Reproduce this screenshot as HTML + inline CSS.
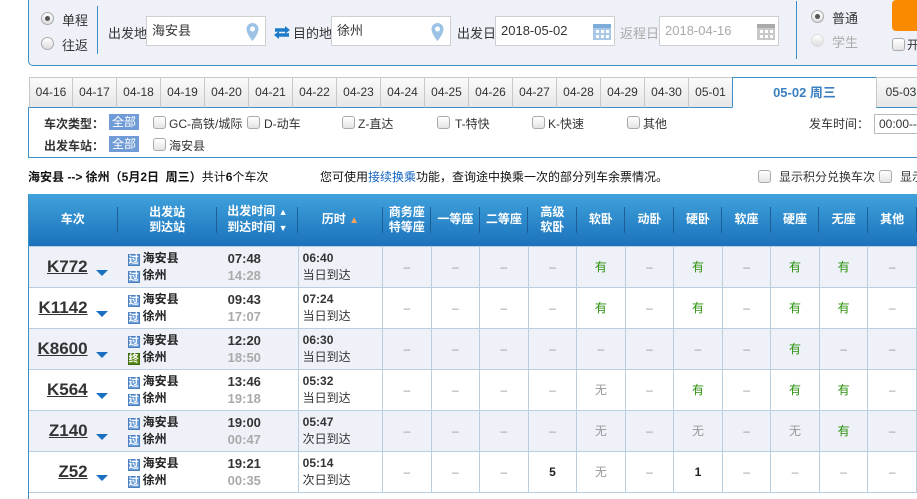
<!DOCTYPE html>
<html><head><meta charset="utf-8"><style>
*{margin:0;padding:0;box-sizing:border-box}
body{width:917px;height:499px;overflow:hidden;background:#fff;font-family:"Liberation Sans","Noto Sans CJK SC",sans-serif;font-size:12px;color:#333;position:relative}
.a{position:absolute;white-space:nowrap}
.top{position:absolute;left:28px;top:-5px;width:900px;height:71px;background:#eef1f8;border:1px solid #3b8fc5;border-radius:5px}
.radio{position:absolute;width:13px;height:13px;border-radius:50%;border:1px solid #aaa;background:linear-gradient(#fff,#ddd)}
.radio.on::after{content:"";position:absolute;left:3px;top:3px;width:5px;height:5px;border-radius:50%;background:#555}
.inp{position:absolute;height:30px;background:#fff;border:1px solid #cfcfcf;font-size:13px;line-height:28px;padding-left:5px}
.cb{position:absolute;width:13px;height:13px;border:1px solid #aaa;border-radius:3px;background:linear-gradient(#fff,#e4e4e4)}
.tab{position:absolute;top:77px;height:31px;border:1px solid #c8c8c8;border-bottom:1px solid #3b8fc5;background:linear-gradient(#fafafa,#e6e6e6);font-size:12px;line-height:29px;text-align:center;color:#333}
.filt{position:absolute;left:28px;top:107px;width:900px;height:51px;border:1px solid #3b8fc5;border-top:none}
.all{position:absolute;background:#6f9bd7;color:#fff;padding:0 3px;height:16px;line-height:16px;font-size:12px}
.b{font-weight:bold}
table{position:absolute;left:28px;top:194px;border-collapse:collapse;table-layout:fixed}
th{height:52px;background:linear-gradient(#40a2dc,#1b72bb);color:#fff;font-size:12px;font-weight:bold;line-height:15px;position:relative}
th::after{content:"";position:absolute;right:0;top:13px;height:26px;border-right:1px solid #1d5f95}
td{height:41px;border:1px solid #b9cfdf;text-align:center;color:#999;font-size:12px}
tr.o td{background:#eef1f8}
td.f{border-left:none;border-right:none}
.g{color:#28900a}
.k{color:#222;font-weight:bold}
.tn{font-size:17px;font-weight:bold;color:#333;text-decoration:underline}
.arr{display:inline-block;border:6px solid transparent;border-top:6px solid #1a6fc0;border-bottom:none;margin-left:8px;vertical-align:-4px}
.gi{display:inline-block;width:12px;height:12px;background:#6c9ed8;color:#fff;font-size:10px;line-height:12px;text-align:center;margin-right:3px;vertical-align:-1px;border:1px solid #4d7fc0}
.gi.j{background:#5a8a1a;border-color:#3d6a10}
.st{text-align:left;padding-left:10px;color:#222;font-weight:bold;line-height:17px}
.tm{text-align:left;padding-left:11px;line-height:17px;font-size:13px;font-weight:bold}
.ls{text-align:left;padding-left:4px;line-height:17px;color:#333}
</style></head><body>
<div class="top"></div>
<div class="radio on" style="left:41px;top:12px"></div><div class="a" style="left:62px;top:10px;font-size:13px">单程</div>
<div class="radio" style="left:41px;top:37px"></div><div class="a" style="left:62px;top:35px;font-size:13px">往返</div>
<div class="a" style="left:97px;top:6px;height:48px;border-left:1px solid #3b8fc5"></div>
<div class="a" style="left:108px;top:23px;font-size:13px">出发地</div>
<div class="inp" style="left:146px;top:16px;width:120px">海安县</div>
<svg class="a" style="left:245px;top:22px" width="15" height="20"><path d="M7.5 1a6 6 0 0 1 6 6c0 5-6 12-6 12s-6-7-6-12a6 6 0 0 1 6-6z" fill="#9cc3e6"/><circle cx="7.5" cy="7" r="2.5" fill="#fff"/></svg>
<svg class="a" style="left:273px;top:25px" width="18" height="15"><path d="M2 5h12M16 10H4" stroke="#1d7cc9" stroke-width="3.5" fill="none"/><path d="M12 1l5 4-5 4zM6 6l-5 4 5 4z" fill="#1d7cc9"/></svg>
<div class="a" style="left:293px;top:23px;font-size:13px">目的地</div>
<div class="inp" style="left:331px;top:16px;width:120px">徐州</div>
<svg class="a" style="left:430px;top:22px" width="15" height="20"><path d="M7.5 1a6 6 0 0 1 6 6c0 5-6 12-6 12s-6-7-6-12a6 6 0 0 1 6-6z" fill="#9cc3e6"/><circle cx="7.5" cy="7" r="2.5" fill="#fff"/></svg>
<div class="a" style="left:457px;top:23px;font-size:13px">出发日</div>
<div class="inp" style="left:495px;top:16px;width:120px">2018-05-02</div>
<svg class="a" style="left:592px;top:21px" width="20" height="20"><rect x="1" y="3" width="18" height="16" fill="#a8c8e6"/><rect x="1" y="3" width="18" height="4" fill="#7eacd8"/><g fill="#fff"><rect x="4" y="9" width="3" height="3"/><rect x="9" y="9" width="3" height="3"/><rect x="14" y="9" width="3" height="3"/><rect x="4" y="14" width="3" height="3"/><rect x="9" y="14" width="3" height="3"/><rect x="14" y="14" width="3" height="3"/></g></svg>
<div class="a" style="left:620px;top:23px;font-size:13px;color:#aaa">返程日</div>
<div class="inp" style="left:659px;top:16px;width:120px;color:#aaa">2018-04-16</div>
<svg class="a" style="left:756px;top:21px" width="20" height="20"><rect x="1" y="3" width="18" height="16" fill="#c8c8c8"/><rect x="1" y="3" width="18" height="4" fill="#aaa"/><g fill="#fff"><rect x="4" y="9" width="3" height="3"/><rect x="9" y="9" width="3" height="3"/><rect x="14" y="9" width="3" height="3"/><rect x="4" y="14" width="3" height="3"/><rect x="9" y="14" width="3" height="3"/><rect x="14" y="14" width="3" height="3"/></g></svg>
<div class="a" style="left:796px;top:1px;height:58px;border-left:1px solid #3b8fc5"></div>
<div class="radio on" style="left:811px;top:10px"></div><div class="a" style="left:832px;top:8px;font-size:13px">普通</div>
<div class="radio" style="left:811px;top:34px;border-color:#ddd"></div><div class="a" style="left:832px;top:32px;font-size:13px;color:#aaa">学生</div>
<div class="a" style="left:892px;top:0;width:30px;height:31px;background:#fb8a00;border-radius:4px"></div>
<div class="cb" style="left:892px;top:38px"></div><div class="a" style="left:907px;top:36px;font-size:12px">开</div>

<div class="tab" style="left:29px;width:44px">04-16</div><div class="tab" style="left:72px;width:45px">04-17</div><div class="tab" style="left:116px;width:45px">04-18</div><div class="tab" style="left:160px;width:45px">04-19</div><div class="tab" style="left:204px;width:45px">04-20</div><div class="tab" style="left:248px;width:45px">04-21</div><div class="tab" style="left:292px;width:45px">04-22</div><div class="tab" style="left:336px;width:45px">04-23</div><div class="tab" style="left:380px;width:45px">04-24</div><div class="tab" style="left:424px;width:45px">04-25</div><div class="tab" style="left:468px;width:45px">04-26</div><div class="tab" style="left:512px;width:45px">04-27</div><div class="tab" style="left:556px;width:45px">04-28</div><div class="tab" style="left:600px;width:45px">04-29</div><div class="tab" style="left:644px;width:45px">04-30</div><div class="tab" style="left:688px;width:45px">05-01</div>
<div class="tab" style="left:732px;width:145px;background:#fff;border-color:#3b8fc5;border-bottom:1px solid #fff;color:#3b7fc0;font-weight:bold;font-size:13px">05-02 周三</div>
<div class="tab" style="left:876px;width:50px">05-03</div>
<div class="filt"></div>
<div class="a b" style="left:44px;top:115px">车次类型：</div><div class="all" style="left:109px;top:114px">全部</div>
<div class="cb" style="left:153px;top:116px"></div><div class="a" style="left:169px;top:115px">GC-高铁/城际</div>
<div class="cb" style="left:247px;top:116px"></div><div class="a" style="left:264px;top:115px">D-动车</div>
<div class="cb" style="left:342px;top:116px"></div><div class="a" style="left:358px;top:115px">Z-直达</div>
<div class="cb" style="left:437px;top:116px"></div><div class="a" style="left:455px;top:115px">T-特快</div>
<div class="cb" style="left:532px;top:116px"></div><div class="a" style="left:548px;top:115px">K-快速</div>
<div class="cb" style="left:627px;top:116px"></div><div class="a" style="left:643px;top:115px">其他</div>
<div class="a" style="left:809px;top:115px">发车时间：</div>
<div class="a" style="left:874px;top:114px;width:50px;height:20px;border:1px solid #bbb;padding-left:4px;line-height:18px">00:00--</div>
<div class="a b" style="left:44px;top:137px">出发车站：</div><div class="all" style="left:109px;top:136px">全部</div>
<div class="cb" style="left:153px;top:138px"></div><div class="a" style="left:169px;top:137px">海安县</div>

<div class="a" style="left:28px;top:168px;color:#111"><b>海安县 --&gt; 徐州（5月2日&nbsp; 周三）</b>共计<b>6</b>个车次</div>
<div class="a" style="left:320px;top:168px;color:#111">您可使用<span style="color:#1565c0">接续换乘</span>功能，查询途中换乘一次的部分列车余票情况。</div>
<div class="cb" style="left:758px;top:170px"></div><div class="a" style="left:779px;top:168px">显示积分兑换车次</div>
<div class="cb" style="left:879px;top:170px"></div><div class="a" style="left:900px;top:168px">显示</div>

<table>
<colgroup><col style="width:90px"><col style="width:100px"><col style="width:82px"><col style="width:85px"><col style="width:49px"><col style="width:49px"><col style="width:49px"><col style="width:49px"><col style="width:49px"><col style="width:49px"><col style="width:49px"><col style="width:49px"><col style="width:49px"><col style="width:49px"><col style="width:49px"></colgroup>
<tr><th>车次</th><th>出发站<br>到达站</th><th>出发时间 <span style="font-size:9px">▲</span><br>到达时间 <span style="font-size:9px">▼</span></th><th>历时 <span style="color:#f6a25a;font-size:10px">▲</span></th><th>商务座<br>特等座</th><th>一等座</th><th>二等座</th><th>高级<br>软卧</th><th>软卧</th><th>动卧</th><th>硬卧</th><th>软座</th><th>硬座</th><th>无座</th><th>其他</th></tr>
<tr class="o"><td class="f" style="text-align:right;padding-right:10px"><span class="tn">K772</span><span class="arr"></span></td><td class="f st"><span class="gi">过</span>海安县<br><span class="gi">过</span>徐州</td><td class="f tm"><span style="color:#333">07:48</span><br><span style="color:#aaa">14:28</span></td><td class="ls"><b>06:40</b><br>当日到达</td><td>–</td><td>–</td><td>–</td><td>–</td><td class="g">有</td><td>–</td><td class="g">有</td><td>–</td><td class="g">有</td><td class="g">有</td><td>–</td></tr>
<tr><td class="f" style="text-align:right;padding-right:10px"><span class="tn">K1142</span><span class="arr"></span></td><td class="f st"><span class="gi">过</span>海安县<br><span class="gi">过</span>徐州</td><td class="f tm"><span style="color:#333">09:43</span><br><span style="color:#aaa">17:07</span></td><td class="ls"><b>07:24</b><br>当日到达</td><td>–</td><td>–</td><td>–</td><td>–</td><td class="g">有</td><td>–</td><td class="g">有</td><td>–</td><td class="g">有</td><td class="g">有</td><td>–</td></tr>
<tr class="o"><td class="f" style="text-align:right;padding-right:10px"><span class="tn">K8600</span><span class="arr"></span></td><td class="f st"><span class="gi">过</span>海安县<br><span class="gi j">终</span>徐州</td><td class="f tm"><span style="color:#333">12:20</span><br><span style="color:#aaa">18:50</span></td><td class="ls"><b>06:30</b><br>当日到达</td><td>–</td><td>–</td><td>–</td><td>–</td><td>–</td><td>–</td><td>–</td><td>–</td><td class="g">有</td><td>–</td><td>–</td></tr>
<tr><td class="f" style="text-align:right;padding-right:10px"><span class="tn">K564</span><span class="arr"></span></td><td class="f st"><span class="gi">过</span>海安县<br><span class="gi">过</span>徐州</td><td class="f tm"><span style="color:#333">13:46</span><br><span style="color:#aaa">19:18</span></td><td class="ls"><b>05:32</b><br>当日到达</td><td>–</td><td>–</td><td>–</td><td>–</td><td>无</td><td>–</td><td class="g">有</td><td>–</td><td class="g">有</td><td class="g">有</td><td>–</td></tr>
<tr class="o"><td class="f" style="text-align:right;padding-right:10px"><span class="tn">Z140</span><span class="arr"></span></td><td class="f st"><span class="gi">过</span>海安县<br><span class="gi">过</span>徐州</td><td class="f tm"><span style="color:#333">19:00</span><br><span style="color:#aaa">00:47</span></td><td class="ls"><b>05:47</b><br>次日到达</td><td>–</td><td>–</td><td>–</td><td>–</td><td>无</td><td>–</td><td>无</td><td>–</td><td>无</td><td class="g">有</td><td>–</td></tr>
<tr><td class="f" style="text-align:right;padding-right:10px"><span class="tn">Z52</span><span class="arr"></span></td><td class="f st"><span class="gi">过</span>海安县<br><span class="gi">过</span>徐州</td><td class="f tm"><span style="color:#333">19:21</span><br><span style="color:#aaa">00:35</span></td><td class="ls"><b>05:14</b><br>次日到达</td><td>–</td><td>–</td><td>–</td><td class="k">5</td><td>无</td><td>–</td><td class="k">1</td><td>–</td><td>–</td><td>–</td><td>–</td></tr>
</table>
<div class="a" style="left:28px;top:194px;height:305px;border-left:1px solid #3b8fc5"></div>
</body></html>
